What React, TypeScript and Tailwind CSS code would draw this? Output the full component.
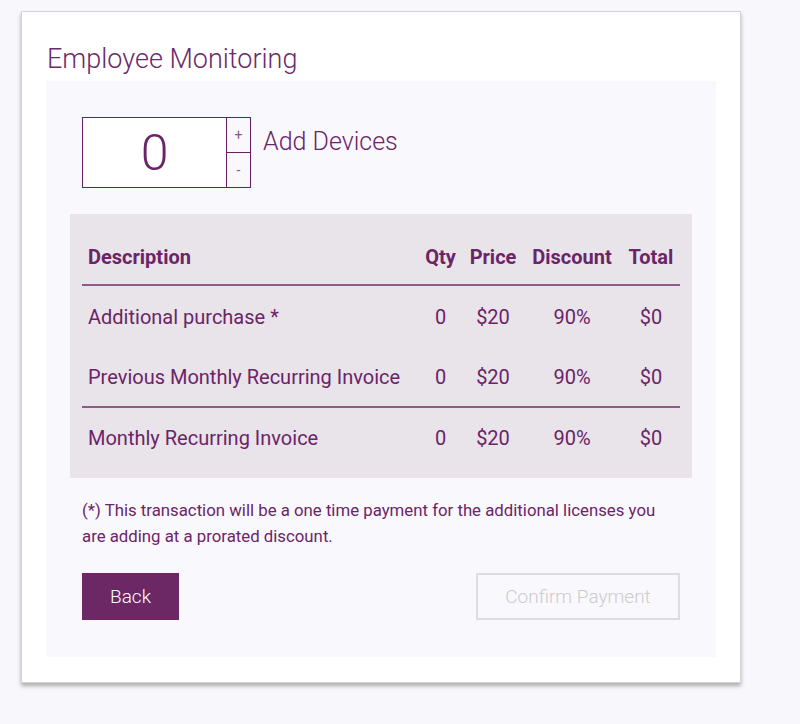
const rows = [
	{ label: "Additional purchase *", qty: 0, price: "$20", discount: "90%", total: "$0", divider: false },
	{ label: "Previous Monthly Recurring Invoice", qty: 0, price: "$20", discount: "90%", total: "$0", divider: false },
	{ label: "Monthly Recurring Invoice", qty: 0, price: "$20", discount: "90%", total: "$0", divider: true },
];

const cols = "grid grid-cols-[335px_47px_58px_100px_58px] items-center";

export default function App() {
	return (
		<div
			className="min-h-screen bg-[#f8f8fc] pt-[11px] pl-[21px]"
			style={{ fontFamily: "Roboto, 'Liberation Sans', sans-serif" }}
		>
			<div className="w-[720px] bg-white border border-[#d4d4d8] shadow-[0_3px_4px_rgba(0,0,0,0.3)] px-[24px] pt-[31px] pb-[25px]">
				<h1 className="text-[27px] leading-[32px] font-light text-[#6b2a6b] pl-px mb-[6px]">
					Employee Monitoring
				</h1>

				<div className="bg-[#f9f8fd] px-6 pt-9 pb-[37px] text-[#6b2467]">
					<div className="flex items-start mx-3">
						<div className="flex h-[71px]">
							<div className="w-[145px] border border-[#6b1f63] bg-white flex items-center justify-center text-[50px] font-light leading-none">
								0
							</div>
							<div className="w-[24px] flex flex-col border-y border-r border-[#6b1f63]">
								<button className="flex-1 border-b border-[#6b1f63] text-[14px] text-[#8a5585] leading-none">
									+
								</button>
								<button className="flex-1 text-[14px] text-[#8a5585] leading-none">-</button>
							</div>
						</div>
						<span className="ml-3 mt-[9px] text-[25px] leading-[32px] font-light">Add Devices</span>
					</div>

					<div className="mt-[26px] bg-[#e9e3ea] px-3 py-3">
						<div className={`${cols} h-[60px] pt-[3px] border-b-2 border-[#8e5a8a] text-[20px] font-bold`}>
							<span className="pl-1.5">Description</span>
							<span className="text-center">Qty</span>
							<span className="text-center">Price</span>
							<span className="text-center">Discount</span>
							<span className="text-center">Total</span>
						</div>
						{rows.map((r) => (
							<div
								key={r.label}
								className={`${cols} h-[60px] pt-[2px] text-[20px] ${r.divider ? "border-t-2 border-[#8e5a8a]" : ""}`}
							>
								<span className="pl-1.5">{r.label}</span>
								<span className="text-center">{r.qty}</span>
								<span className="text-center">{r.price}</span>
								<span className="text-center">{r.discount}</span>
								<span className="text-center">{r.total}</span>
							</div>
						))}
					</div>

					<p className="mt-[19px] mx-3 text-[16.8px] leading-[26px]">
						(*) This transaction will be a one time payment for the additional licenses you are adding at a prorated discount.
					</p>

					<div className="mt-6 mx-3 flex justify-between">
						<button className="w-[97px] h-[47px] pt-px bg-[#6c2864] text-white text-[19px] font-light">Back</button>
						<button className="w-[204px] h-[47px] pt-px border-2 border-[#dddddd] text-[#cccccc] text-[19px] font-light">
							Confirm Payment
						</button>
					</div>
				</div>
			</div>
		</div>
	);
}
